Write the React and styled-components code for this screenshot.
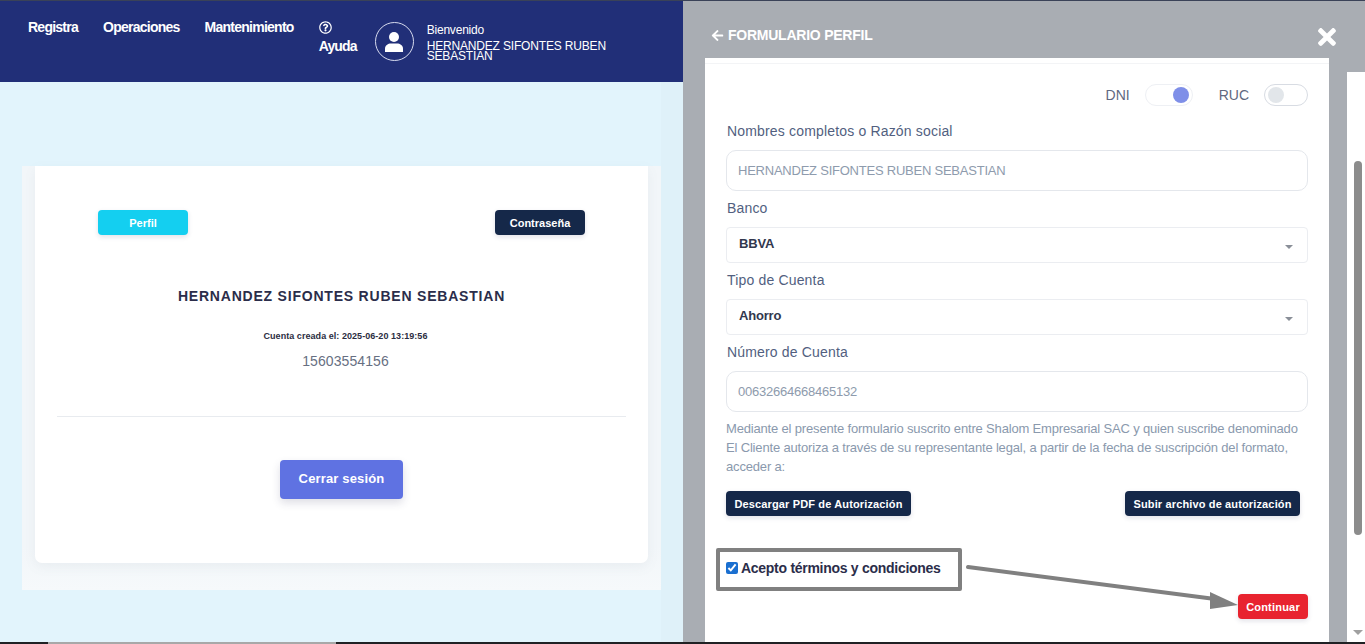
import React from "react";
import styled, { createGlobalStyle } from "styled-components";
import { FaRegQuestionCircle, FaArrowLeft, FaTimes } from "react-icons/fa";

const Global = createGlobalStyle`
  html, body { margin: 0; padding: 0; height: 100%; overflow: hidden; }
  body { font-family: "Liberation Sans", Arial, sans-serif; background: #e2f4fc; }
  * { box-sizing: border-box; }
`;

const Page = styled.div`
  width: 1365px;
  height: 644px;
  display: flex;
  flex-direction: column;
  overflow: hidden;
  position: relative;
`;
const TopLine = styled.div`
  height: 1px;
  flex: none;
  background: #3a4258;
`;
const Columns = styled.div`
  flex: 1;
  min-height: 0;
  display: flex;
`;
const Left = styled.div`
  width: 683px;
  flex: none;
  display: flex;
  flex-direction: column;
  background: #e2f4fc;
`;
const Header = styled.header`
  height: 81px;
  flex: none;
  background: #212f78;
  display: flex;
  align-items: flex-start;
  padding: 18px 0 0 28px;
  color: #fff;
`;
const NavItem = styled.div`
  font-size: 14px;
  font-weight: 700;
  line-height: 17px;
  margin-right: 25px;
  letter-spacing: -0.75px;
`;
const HelpItem = styled.div`
  display: flex;
  flex-direction: column;
  gap: 4px;
  font-size: 14px;
  font-weight: 700;
  line-height: 17px;
  margin-top: 2px;
  width: 56px;
  flex: none;
  letter-spacing: -0.85px;
  svg { display: block; font-size: 13px; }
`;
const Avatar = styled.div`
  width: 39px;
  height: 39px;
  flex: none;
  margin-top: 3px;
  border: 1px solid #d6daee;
  border-radius: 50%;
  display: flex;
  align-items: center;
  justify-content: center;
`;
const UserBlock = styled.div`
  margin: 4px 0 0 13px;
  width: 212px;
  font-size: 12px;
`;
const Welcome = styled.div`
  line-height: 14px;
  margin-bottom: 4px;
  letter-spacing: -0.2px;
`;
const UserName = styled.div`
  line-height: 10px;
  letter-spacing: -0.17px;
`;
const Content = styled.main`
  flex: 1;
  padding: 84px 22px 0;
  background: linear-gradient(90deg, #e2f4fc 661px, #dff1f9 661px);
`;
const OuterCard = styled.section`
  height: 424px;
  background: linear-gradient(180deg, #f2f6f9 0%, #f2f6f9 90%, #f6f9fb 100%);
  padding: 0 13px;
`;
const Card = styled.div`
  height: 397px;
  background: #fff;
  border-radius: 0 0 7px 7px;
  box-shadow: 0 4px 12px rgba(120, 130, 140, 0.08);
  padding: 44px 22px 0;
  display: flex;
  flex-direction: column;
  align-items: center;
`;
const TabRow = styled.div`
  align-self: stretch;
  display: flex;
  justify-content: space-between;
  padding: 0 41px;
`;
const TabButton = styled.button`
  width: 90px;
  height: 25px;
  border: 0;
  border-radius: 4px;
  font: 700 11px "Liberation Sans", Arial, sans-serif;
  color: #fff;
  background: ${(p) => p.$bg};
  box-shadow: 0 2px 5px rgba(50, 50, 93, 0.14);
`;
const Title = styled.h1`
  margin: 52px 0 0;
  font-size: 14px;
  line-height: 18px;
  font-weight: 700;
  letter-spacing: 0.79px;
  color: #2b2d4a;
`;
const Created = styled.div`
  margin: 25px 0 0 8px;
  font-size: 9px;
  line-height: 12px;
  font-weight: 700;
  letter-spacing: 0.05px;
  color: #2b2d42;
`;
const Phone = styled.div`
  margin: 10px 0 0 8px;
  font-size: 14px;
  line-height: 18px;
  color: #676f82;
  letter-spacing: 0.1px;
`;
const Rule = styled.hr`
  align-self: stretch;
  margin: 46px 0 0;
  border: 0;
  border-top: 1px solid #e8ebef;
`;
const LogoutButton = styled.button`
  margin-top: 43px;
  width: 123px;
  height: 39px;
  border: 0;
  border-radius: 4px;
  background: #5f72e2;
  color: #fff;
  font: 700 13px "Liberation Sans", Arial, sans-serif;
  letter-spacing: 0.15px;
  padding: 0 0 2px;
  box-shadow: 0 4px 8px rgba(50, 50, 93, 0.16);
`;

const Drawer = styled.aside`
  flex: 1;
  min-width: 0;
  background: #a9adb3;
  display: flex;
  flex-direction: column;
  position: relative;
`;
const DrawerHead = styled.div`
  height: 57px;
  flex: none;
  display: flex;
  align-items: flex-start;
  padding: 26px 25px 0 28px;
  color: #fff;
  justify-content: space-between;
`;
const DrawerTitle = styled.div`
  display: flex;
  align-items: center;
  gap: 4px;
  font-size: 14px;
  line-height: 16px;
  font-weight: 700;
  letter-spacing: -0.24px;
  svg { font-size: 13px; }
`;
const CloseIcon = styled.div`
  font-size: 26px;
  line-height: 0;
  margin-top: -3px;
`;
const Panel = styled.div`
  flex: 1;
  margin: 0 36px 0 22px;
  background: linear-gradient(180deg, #fff 5px, #f3f4f6 5px, #f3f4f6 6px, #fff 6px);
  padding: 26px 21px 0;
  position: relative;
`;
const SwitchRow = styled.div`
  display: flex;
  justify-content: flex-end;
  align-items: center;
  height: 21px;
  font-size: 14px;
  color: #5f6880;
`;
const SwitchLabel = styled.span`
  margin-left: ${(p) => p.$gap}px;
`;
const Switch = styled.span`
  width: ${(p) => p.$w}px;
  height: 22px;
  margin-left: 15px;
  border-radius: 11px;
  border: 1px solid ${(p) => (p.$on ? "#eef0f4" : "#d8dce3")};
  display: flex;
  align-items: center;
  justify-content: ${(p) => (p.$on ? "flex-end" : "flex-start")};
  padding: 0 3px;
  &::after {
    content: "";
    width: 16px;
    height: 16px;
    border-radius: 50%;
    background: ${(p) => (p.$on ? "#7f8fe8" : "#e2e6ea")};
  }
`;
const Label = styled.label`
  display: block;
  font-size: 14px;
  line-height: 18px;
  color: #525f7f;
  letter-spacing: 0.17px;
  margin-top: ${(p) => p.$top}px;
  margin-left: 1px;
`;
const Field = styled.div`
  height: 41px;
  margin-top: 10px;
  border: 1px solid #e4e7ec;
  border-radius: 10px;
  padding-left: 11px;
  font-size: 13px;
  line-height: 40px;
  letter-spacing: -0.23px;
  color: #8e9bad;
`;
const SelectBox = styled.div`
  height: 36px;
  margin-top: 10px;
  border: 1px solid #ebedf1;
  border-radius: 4px;
  padding: 0 14px 4px 12px;
  display: flex;
  justify-content: space-between;
  align-items: center;
  font-size: 13px;
  font-weight: 700;
  letter-spacing: -0.2px;
  color: #32384e;
  &::after {
    content: "";
    margin-top: 8px;
    border-left: 4px solid transparent;
    border-right: 4px solid transparent;
    border-top: 4px solid #8a8f98;
  }
`;
const Notice = styled.p`
  margin: 7px 0 0;
  font-size: 13px;
  line-height: 19px;
  color: #8a99ad;
  letter-spacing: -0.17px;
`;
const ActionRow = styled.div`
  display: flex;
  justify-content: space-between;
  padding-right: 8px;
  margin-top: 15px;
`;
const DarkButton = styled.button`
  width: ${(p) => p.$w}px;
  height: 25px;
  border: 0;
  border-radius: 4px;
  background: #152849;
  color: #fff;
  font: 700 11px "Liberation Sans", Arial, sans-serif;
  letter-spacing: 0.14px;
  box-shadow: 0 2px 5px rgba(50, 50, 93, 0.14);
  padding: 0;
`;
const TermsRow = styled.div`
  position: relative;
  display: flex;
  align-items: center;
  gap: 3px;
  margin-top: 43px;
  height: 18px;
  font-size: 14px;
  font-weight: 700;
  letter-spacing: -0.28px;
  color: #2b2d4a;
`;
const Check = styled.input`
  width: 12px;
  height: 12px;
  margin: 0;
  accent-color: #1a6fd0;
`;
const TermsFrame = styled.div`
  position: absolute;
  left: -10px;
  top: -11px;
  width: 246px;
  height: 43px;
  border: 4px solid #808080;
  border-radius: 2px;
`;
const ContinueRow = styled.div`
  display: flex;
  justify-content: flex-end;
  margin-top: 17px;
`;
const ContinueButton = styled.button`
  width: 70px;
  height: 25px;
  border: 0;
  border-radius: 4px;
  background: #e8232f;
  color: #fff;
  font: 700 11px "Liberation Sans", Arial, sans-serif;
  letter-spacing: 0.2px;
  box-shadow: 0 2px 5px rgba(50, 50, 93, 0.14);
  padding: 0;
`;
const ArrowMark = styled.svg`
  position: absolute;
  left: 255px;
  top: 501px;
`;
const ScrollTrack = styled.div`
  position: absolute;
  right: 0;
  top: 71px;
  bottom: 0;
  width: 18px;
  background: #fff;
`;
const ScrollThumb = styled.div`
  position: absolute;
  left: 7px;
  right: 3px;
  top: 89px;
  height: 374px;
  border-radius: 4px;
  background: #8c8c8c;
`;
const ScrollArrow = styled.div`
  position: absolute;
  left: 6px;
  bottom: 7px;
  border-left: 5px solid transparent;
  border-right: 5px solid transparent;
  border-top: 5px solid #a0a0a0;
`;
const BottomBar = styled.div`
  height: 2px;
  flex: none;
  background: #202124;
  padding-left: 48px;
  &::before {
    content: "";
    display: block;
    width: 288px;
    height: 2px;
    background: #a8a8a8;
  }
`;

export default function App() {
  return (
    <Page>
      <Global />
      <TopLine />
      <Columns>
        <Left>
          <Header>
            <NavItem>Registra</NavItem>
            <NavItem>Operaciones</NavItem>
            <NavItem>Mantenimiento</NavItem>
            <HelpItem>
              <FaRegQuestionCircle />
              <span>Ayuda</span>
            </HelpItem>
            <Avatar>
              <svg width="20" height="22" viewBox="0 0 20 22" fill="#fff">
                <circle cx="10" cy="6" r="5" />
                <path d="M1 21v-3.5C1 14.5 4 12.5 7 12.5h6c3 0 6 2 6 5V21z" />
              </svg>
            </Avatar>
            <UserBlock>
              <Welcome>Bienvenido</Welcome>
              <UserName>HERNANDEZ SIFONTES RUBEN SEBASTIAN</UserName>
            </UserBlock>
          </Header>
          <Content>
            <OuterCard>
              <Card>
                <TabRow>
                  <TabButton $bg="#14cff0">Perfil</TabButton>
                  <TabButton $bg="#152849">Contraseña</TabButton>
                </TabRow>
                <Title>HERNANDEZ SIFONTES RUBEN SEBASTIAN</Title>
                <Created>Cuenta creada el: 2025-06-20 13:19:56</Created>
                <Phone>15603554156</Phone>
                <Rule />
                <LogoutButton>Cerrar sesión</LogoutButton>
              </Card>
            </OuterCard>
          </Content>
        </Left>
        <Drawer>
          <DrawerHead>
            <DrawerTitle>
              <FaArrowLeft />
              FORMULARIO PERFIL
            </DrawerTitle>
            <CloseIcon>
              <FaTimes />
            </CloseIcon>
          </DrawerHead>
          <Panel>
            <SwitchRow>
              <SwitchLabel $gap={0}>DNI</SwitchLabel>
              <Switch $on $w={48} />
              <SwitchLabel $gap={26}>RUC</SwitchLabel>
              <Switch $w={44} />
            </SwitchRow>
            <Label $top={17}>Nombres completos o Razón social</Label>
            <Field>HERNANDEZ SIFONTES RUBEN SEBASTIAN</Field>
            <Label $top={8}>Banco</Label>
            <SelectBox>BBVA</SelectBox>
            <Label $top={8}>Tipo de Cuenta</Label>
            <SelectBox>Ahorro</SelectBox>
            <Label $top={8}>Número de Cuenta</Label>
            <Field>00632664668465132</Field>
            <Notice>
              Mediante el presente formulario suscrito entre Shalom Empresarial
              SAC y quien suscribe denominado<br />El Cliente autoriza a través de su
              representante legal, a partir de la fecha de suscripción del
              formato,<br />acceder a:
            </Notice>
            <ActionRow>
              <DarkButton $w={185}>Descargar PDF de Autorización</DarkButton>
              <DarkButton $w={175}>Subir archivo de autorización</DarkButton>
            </ActionRow>
            <TermsRow>
              <Check type="checkbox" defaultChecked />
              Acepto términos y condiciones
              <TermsFrame />
            </TermsRow>
            <ContinueRow>
              <ContinueButton>Continuar</ContinueButton>
            </ContinueRow>
            <ArrowMark width="282" height="56" viewBox="0 0 282 56">
              <path d="M8 8L255 40" stroke="#808080" strokeWidth="4" strokeLinecap="round" fill="none" />
              <path d="M278 46L250 33L250 50Z" fill="#808080" />
            </ArrowMark>
          </Panel>
          <ScrollTrack>
            <ScrollThumb />
            <ScrollArrow />
          </ScrollTrack>
        </Drawer>
      </Columns>
      <BottomBar />
    </Page>
  );
}
